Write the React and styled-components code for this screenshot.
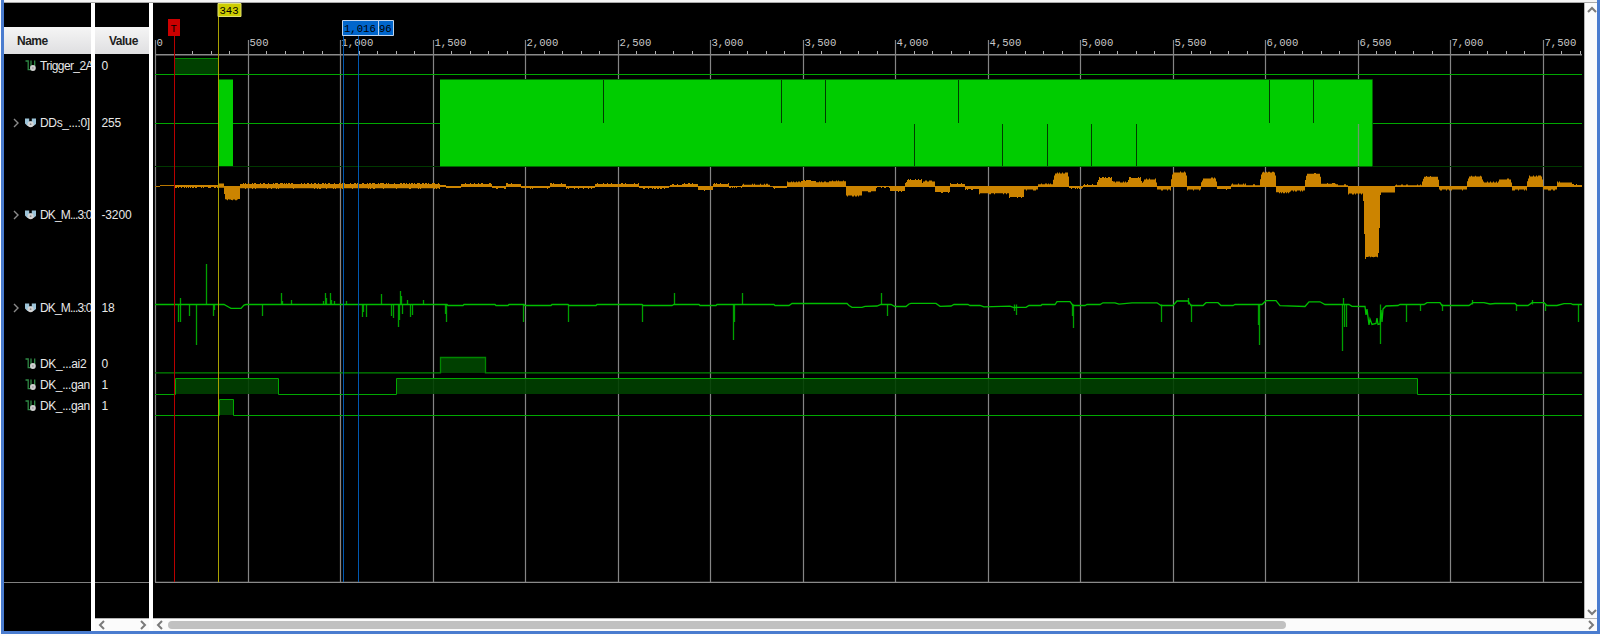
import React from 'react';
import styled, { createGlobalStyle } from 'styled-components';

const GREEN = '#00cc00';
const LINE = '#00a800';
const FILL = '#004000';
const ORANGE = '#cc8400';

const GlobalStyle = createGlobalStyle`
  body {
    margin: 0;
    background: #fff;
    overflow: hidden;
  }
`;

const Page = styled.div`
  box-sizing: border-box;
  width: 1600px;
  height: 636px;
  padding: 0 0 2px 1px;
  background: #fdfdfd;
`;

const Frame = styled.div`
  box-sizing: border-box;
  display: flex;
  flex-direction: column;
  height: 634px;
  border: solid #4a7ccf;
  border-width: 0 3px 3px;
`;

const TopEdge = styled.div`
  box-sizing: border-box;
  flex: none;
  height: 3px;
  background: #f4f4f4;
  border-bottom: 1px solid #a8a8a8;
`;

const Panels = styled.div`
  display: flex;
  flex: 1;
  min-height: 0;
  background: #fff;
`;

const Column = styled.div`
  box-sizing: border-box;
  display: flex;
  flex-direction: column;
  flex: none;
  width: ${(p) => p.$width}px;
  margin-right: ${(p) => p.$gap}px;
  background: #000;
  overflow: hidden;
`;

const Header = styled.div`
  box-sizing: border-box;
  flex: none;
  height: 27px;
  margin-top: 24px;
  padding-left: ${(p) => p.$indent}px;
  background: linear-gradient(#f5f5f5, #dfdfe1);
  color: #202020;
  font: bold 12px/29px 'Liberation Sans', Arial, sans-serif;
  letter-spacing: -0.5px;
`;

const Rows = styled.div`
  box-sizing: border-box;
  flex: none;
  height: 529px;
  padding-top: 1px;
  border-bottom: 1px solid #808080;
`;

const Row = styled.div`
  display: flex;
  align-items: center;
  box-sizing: border-box;
  height: ${(p) => (p.$bus ? 92.4 : 21.2)}px;
  padding-top: ${(p) => (p.$bus ? 1 : 0)}px;
  padding-left: ${(p) => p.$indent}px;
  color: #e8e8e8;
  font: 12px 'Liberation Sans', Arial, sans-serif;
  letter-spacing: ${(p) => p.$tracking}px;
  white-space: nowrap;
`;

const Expander = styled.span`
  display: flex;
  flex: none;
  width: 14px;
`;

const Glyph = styled.span`
  display: flex;
  flex: none;
  width: 15px;
`;

const Spacer = styled.div`
  flex: 1;
`;

const HScroll = styled.div`
  box-sizing: border-box;
  display: flex;
  align-items: center;
  flex: none;
  height: 13px;
  padding: 0 1px 0 2px;
  border-top: 1px solid #b4b4b4;
  background: #fbfbfb;
`;

const Track = styled.div`
  flex: 1;
  height: 8px;
  padding: 0 3px;
`;

const Thumb = styled.div`
  width: 1118px;
  height: 8px;
  border-radius: 4px;
  background: #c1c1c1;
`;

const WaveArea = styled.div`
  display: flex;
  flex-direction: column;
  flex: 1;
  min-width: 0;
`;

const WaveTop = styled.div`
  display: flex;
  flex: 1;
  min-height: 0;
`;

const Wave = styled.svg`
  display: block;
  flex: none;
  width: 1431px;
  height: 615px;
  background: #000;
`;

const VScroll = styled.div`
  box-sizing: border-box;
  display: flex;
  flex-direction: column;
  align-items: center;
  justify-content: space-between;
  flex: 1;
  padding: 2px 0 1px 1px;
  border-left: 1px solid #b4b4b4;
  background: #fbfbfb;
`;

// tracking tightens the longer names so that they fit the narrow column
const signals = [
  { name: 'Trigger_2A', value: '0', tracking: -0.6 },
  { name: 'DDs_...:0]', value: '255', bus: true, tracking: -0.35 },
  { name: 'DK_M...3:0', value: '-3200', bus: true, tracking: -0.85 },
  { name: 'DK_M...3:0', value: '18', bus: true, tracking: -0.85 },
  { name: 'DK_...ai2', value: '0', tracking: -0.35 },
  { name: 'DK_...gan', value: '1', tracking: -0.4 },
  { name: 'DK_...gan', value: '1', tracking: -0.4 },
];

// [x0, x1, y]: level held between x0 and x1, drawn from the zero line at 186
const levels = [
  [461, 492, 184], [492, 506, 188], [506, 521, 184], [521, 550, 188], [550, 566, 184],
  [566, 595, 188], [595, 639, 184], [639, 669, 188], [670, 684, 185], [684, 698, 184],
  [698, 713, 190], [713, 729, 184], [729, 742, 187], [742, 770, 184.7], [773, 787, 188],
  [787, 801, 182.3], [801, 816, 181], [816, 829, 182.3], [829, 846, 181.3],
  [846, 862, 195.5], [862, 876, 191.3], [876, 890, 187], [890, 905, 191],
  [905, 923, 180], [923, 935, 181.5], [935, 950, 192], [950, 965, 184], [965, 979, 189],
  [979, 1009, 193.3], [1009, 1024, 197], [1024, 1038, 189.5], [1038, 1053, 184.3],
  [1053, 1069, 173.5], [1069, 1083, 188], [1083, 1097, 185], [1097, 1113, 178],
  [1113, 1127, 182.4], [1127, 1142, 178], [1142, 1157, 179.5], [1157, 1171, 189.5],
  [1171, 1187, 172.4], [1187, 1201, 189.5], [1201, 1217, 178.4], [1217, 1231, 189],
  [1231, 1246, 184.4], [1246, 1260, 185.2], [1260, 1276, 172.6], [1276, 1290, 192.3],
  [1290, 1305, 190.6], [1305, 1321, 173.8], [1321, 1336, 183.8], [1336, 1348, 185.2],
  [1348, 1363, 193.5], [1380, 1395, 192.5], [1395, 1422, 185.3], [1422, 1439, 176.8],
  [1439, 1467, 189.5], [1467, 1483, 176.6], [1483, 1497, 182.5], [1497, 1512, 179.5],
  [1512, 1527, 189.5], [1527, 1543, 176.5], [1543, 1557, 189.5], [1557, 1572, 182.5],
  [1572, 1582, 185],
];

const jitter = (x) => {
  const s = Math.sin(x * 127.1) * 43758.5453;
  return s - Math.floor(s);
};

const orangeArea = () => {
  let d = '';
  const bar = (x, a, b) => {
    d += `M${x} ${a}h1V${b}h-1z`;
  };
  for (let x = 174; x < 219; x++) bar(x, 185, jitter(x) > 0.6 ? 188 : 187);
  for (let x = 219; x < 224; x++) bar(x, 183.6, 187.8);
  for (let x = 224; x < 240; x++) bar(x, 186, x === 224 ? 194 : 199 + jitter(x) * 1.5);
  for (let x = 240; x < 440; x++) {
    bar(x, jitter(x) > 0.6 ? 183 : 184, jitter(x + 0.5) > 0.8 ? 189 : 188.3);
  }
  for (let x = 440; x < 461; x++) bar(x, x < 446 ? 185 : 186, x < 446 ? 187 : 188);
  levels.forEach(([x0, x1, y]) => {
    const up = y < 186;
    const big = Math.abs(y - 186) > 5;
    for (let x = x0; x < x1; x++) {
      let level = y;
      if (jitter(x) > 0.72) level += up ? -0.9 : 0.9;
      if (up && big && x === x0) level = (y + 186) / 2;
      if (up && big && x === x0 + 1) level = y + 2;
      if (up && big && x === x1 - 1) level = y + 3;
      bar(x, up ? level : 186, up ? 187 : level);
    }
  });
  bar(1363, 186, 201);
  bar(1364, 186, 234);
  for (let x = 1365; x < 1379; x++) {
    bar(x, 186, x === 1365 ? 259 : x === 1378 ? 253 : 256.5 + jitter(x));
  }
  bar(1379, 186, 228);
  bar(1380, 186, 195);
  return d;
};

const analog = `155,304.5 224,304.5 229,307.3 231,308.4 241,308.4 244,305 246,304.5 447,304.5
  448,305.5 463,305.5 464,304.5 495,304.5 496,305.5 508,305.5 509,304.5 524,304.5 525,305.5
  551,305.5 552,304.5 568,304.5 569,305.5 596,305.5 597,304.5 642,304.5 643,305.5 672,305.5
  674,304.5 699,304.5 700,305.5 716,305.5 717,304.5 774,304.5 775,305.5 789,305.5 792,303.5
  847,303.5 849,305.5 852,307.4 862,307.4 865,306.4 877,306 881,304.5 891,304.5 895,306.5
  906,306.5 909,304 911,303.4 936,303.4 940,306.3 951,306 954,304.5 968,304.5 970,305.5
  980,305.5 984,306.8 1010,306.2 1014,307.5 1026,307.3 1029,305.5 1041,305.5 1042,304.5 1055,304.5 1057,301.6 1070,301.6
  1073,305.5 1085,305.5 1087,304.5 1100,304.5 1103,302.8 1115,302.8 1119,304.2 1132,302.8
  1157,302.8 1161,305.5 1173,305.5 1177,301 1188,301 1191,305.5 1203,305.5 1206,302.7
  1218,302.7 1221,305.5 1233,305.5 1235,304.5 1262,304.5 1266,300.7 1276,300.7 1280,305.7
  1305,306.5 1309,301.8 1320,301.8 1325,304.5 1349,304.5 1352,306.4 1365,306.5 1366,315
  1367,309 1369,325 1370,319 1372,324.5 1376,323.5 1377,318 1378,324.5 1380,324 1381,310
  1382,322 1383,309 1386,306 1398,305.5 1400,304.5 1424,304.5 1427,302.7 1440,302.7 1442,305.5 1469,305.5
  1473,302.7 1484,302.7 1490,304 1495,303.5 1515,303.5 1517,305.5 1528,305.5 1532,302.7
  1544,302.7 1547,305.5 1557,305.5 1564,303.7 1571,303.7 1573,304.5 1582,304.5`;

// [x, tip of the glitch]
const spikes = [
  [178, 322], [180, 298], [180, 322], [189, 316], [196, 345], [206, 264], [213, 316],
  [214, 310], [262, 316], [281, 293], [282, 301], [291, 300], [323, 301], [325, 293],
  [326, 298], [330, 293], [331, 300], [334, 301], [346, 301], [362, 317], [363, 312],
  [366, 317], [381, 294], [391, 316], [393, 318], [398, 327], [399, 320],
  [400, 291], [401, 296], [402, 314], [407, 300], [410, 317], [412, 315], [423, 300],
  [445, 314], [446, 322], [523, 322], [568, 322], [642, 322], [674, 293], [733, 340],
  [734, 322], [742, 293], [881, 293], [887, 316], [1014, 311], [1016, 315], [1072, 316],
  [1073, 328], [1161, 322], [1188, 298], [1191, 322], [1258, 325], [1259, 345], [1342, 351],
  [1343, 298], [1344, 327], [1346, 327], [1380, 344], [1406, 322], [1420, 311],
  [1442, 311], [1472, 300], [1516, 311], [1532, 300], [1545, 311], [1578, 322],
];

const topNotches = [603, 781, 825, 958, 1269, 1313];
const bottomNotches = [914, 1002, 1047, 1091, 1136];

const xOf = (v) => Math.round(155.4 + v * 0.185);

const Chevron = ({ dir, thin }) => {
  const turn = { right: 0, down: 90, left: 180, up: 270 }[dir];
  return (
    <svg width="10" height="10" viewBox="0 0 10 10">
      <path
        d="M3 1l4 4-4 4"
        fill="none"
        stroke={thin ? '#8a8a8a' : '#7a7a7a'}
        strokeWidth={thin ? 1.4 : 2}
        transform={`rotate(${turn} 5 5)`}
      />
    </svg>
  );
};

const WireIcon = () => (
  <svg width="12" height="12" viewBox="-1 0 12 12">
    <path d="M-.5 1h2.7v8.7H5M5 .5V7M8.7 .5V6" fill="none" stroke="#2f8a45" strokeWidth="1.3" />
    <circle cx="6.9" cy="8" r="2.9" fill="#d0d0d0" />
    <circle cx="6.9" cy="8" r="0.8" fill="#888" />
  </svg>
);

const BusIcon = () => (
  <svg width="11" height="10" viewBox="0 0 11 10">
    <path d="M0 .5h4.2v3h2.6v-3H11V6L8.5 8h-6L0 5.5z" fill="#9cc3d8" />
    <circle cx="5.6" cy="6.2" r="3" fill="#d4d4d4" />
    <circle cx="5.6" cy="6.2" r="0.9" fill="#888" />
  </svg>
);

const Ruler = () => {
  const ticks = [];
  for (let v = 0; v <= 7700; v += 100) ticks.push(v);
  return (
    <g>
      <path d="M155 54.8H1582" stroke="#8a8a8a" strokeWidth="1.4" />
      <path d="M155 582.3H1582" stroke="#8a8a8a" strokeWidth="1.3" />
      {ticks.map((v) => {
        const x = xOf(v) + 0.5;
        const major = v % 500 === 0;
        return (
          <g key={v}>
            <path
              d={major ? `M${x} 40V582` : `M${x} 51V54`}
              stroke={major ? '#858585' : '#b0b0b0'}
              strokeWidth={major ? 1.2 : 1}
            />
            {major && (
              <text x={x + 1} y="45.5" fill="#c8c8c8">
                {v.toLocaleString('en-US')}
              </text>
            )}
          </g>
        );
      })}
    </g>
  );
};

const Waveforms = () => (
  <g>
    <path d="M174 59h44v15h-44z" fill={FILL} />
    <path d="M155 74.5H1582M155 123.5H1582" stroke={LINE} />
    <path d="M174.5 74V58.5H218" fill="none" stroke="#008c00" />
    <path d="M155 166.5H1582" stroke="#003800" />
    <path d="M219 80h14v86h-14zM440 80h932v86H440z" fill={GREEN} />
    <path d="M219 79.5h14M440 79.5h932.5V166M440 166.5h932" fill="none" stroke="#006800" />
    {topNotches.map((x) => (
      <path key={x} d={`M${x + 0.5} 80V123`} stroke="#003c00" />
    ))}
    {bottomNotches.map((x) => (
      <path key={x} d={`M${x + 0.5} 124V166`} stroke="#003c00" />
    ))}
    <path d="M1358.5 124V166" stroke="#6c9c6c" strokeWidth="1.3" />

    <path d="M155 186.5h5M160 185.5h14M440 186.5H1582" stroke="#b87600" />
    <path d={orangeArea()} fill={ORANGE} />

    {spikes.map(([x, y]) => (
      <path key={`${x}-${y}`} d={`M${x + 0.5} 304.5V${y}`} stroke="#00a000" strokeWidth="1.3" />
    ))}
    <polyline points={analog} fill="none" stroke="#00be00" strokeWidth="1.3" />

    <path d="M441 357h44v16h-44z" fill={FILL} />
    <path d="M155 372.8H440.5V357.5H485.5V372.8H1582" fill="none" stroke="#008600" strokeWidth="1.3" />
    <path d="M175 379h103v15H175zM396 379h1021v15H396z" fill={FILL} fillOpacity="0.9" />
    <path d="M155 394.5H175.5V378.5H278.5V394.5H396.5V378.5H1417.5V394.5H1582" fill="none" stroke={LINE} />
    <path d="M219 400h14v15h-14z" fill={FILL} />
    <path d="M155 415.5H219.5V399.5H233.5V415.5H1582" fill="none" stroke={LINE} />
  </g>
);

const Markers = () => (
  <g>
    <path d="M174.5 36V582" stroke="#b80000" />
    <path d="M218.5 17V582" stroke="#a8a000" />
    <path d="M343.5 36V582M358.5 36V582" stroke="#0058b0" />
    <path d="M168 19h12v17h-12z" fill="#cc0000" />
    <text x="170.5" y="31.5" fill="#000">T</text>
    <path d="M218 3.5h23v13h-23z" fill="#cccc00" stroke="#e0e070" />
    <text x="219.5" y="13.5" fill="#000">343</text>
    <path d="M357.5 20.5h36v15h-36z" fill="#0066cc" stroke="#c0d4ec" />
    <text x="379" y="31.5" fill="#000">96</text>
    <path d="M342.5 20.5h36v15h-36z" fill="#0066cc" stroke="#c0d4ec" />
    <text x="344" y="31.5" fill="#000">1,016</text>
  </g>
);

function App() {
  return (
    <Page>
      <GlobalStyle />
      <Frame>
        <TopEdge />
        <Panels>
          <Column $width={87} $gap={4}>
            <Header $indent={13}>Name</Header>
            <Rows>
              {signals.map((s, i) => (
                <Row key={i} $bus={s.bus} $indent={7} $tracking={s.tracking}>
                  <Expander>
                    {s.bus && <Chevron dir="right" thin />}
                  </Expander>
                  <Glyph>{s.bus ? <BusIcon /> : <WireIcon />}</Glyph>
                  {s.name}
                </Row>
              ))}
            </Rows>
          </Column>
          <Column $width={54} $gap={4}>
            <Header $indent={14}>Value</Header>
            <Rows>
              {signals.map((s, i) => (
                <Row key={i} $bus={s.bus} $indent={6.5} $tracking={-0.15}>{s.value}</Row>
              ))}
            </Rows>
            <Spacer />
            <HScroll>
              <Chevron dir="left" />
              <Spacer />
              <Chevron dir="right" />
            </HScroll>
          </Column>
          <WaveArea>
            <WaveTop>
              <Wave viewBox="153 3 1431 615" fontFamily="'Liberation Mono', monospace" fontSize="10.6">
                <Ruler />
                <Waveforms />
                <Markers />
              </Wave>
              <VScroll>
                <Chevron dir="up" />
                <Chevron dir="down" />
              </VScroll>
            </WaveTop>
            <HScroll>
              <Chevron dir="left" />
              <Track>
                <Thumb />
              </Track>
              <Chevron dir="right" />
            </HScroll>
          </WaveArea>
        </Panels>
      </Frame>
    </Page>
  );
}

export default App;
